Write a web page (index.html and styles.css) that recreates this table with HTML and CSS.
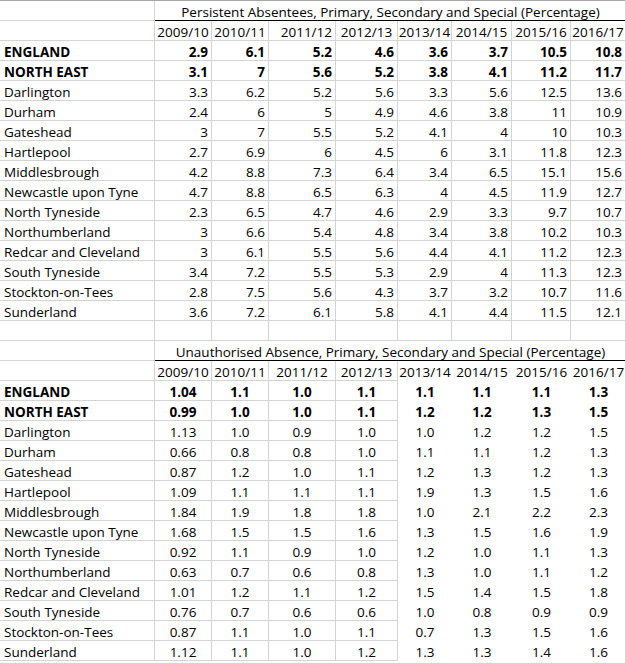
FILE: index.html
```html
<!DOCTYPE html>
<html>
<head>
<meta charset="utf-8">
<link rel="stylesheet" href="styles.css">
</head>
<body>
<div class="sheet">
  <div class="grid top">
    <div class="c lab first"></div>
    <div class="c title first">Persistent Absentees, Primary, Secondary and Special (Percentage)</div>

    <div class="c lab"></div>
    <div class="c yr">2009/10</div><div class="c yr">2010/11</div><div class="c yr r">2011/12</div><div class="c yr">2012/13</div><div class="c yr">2013/14</div><div class="c yr">2014/15</div><div class="c yr">2015/16</div><div class="c yr">2016/17</div>

    <div class="c lab b">ENGLAND</div><div class="c v b">2.9</div><div class="c v b">6.1</div><div class="c v b">5.2</div><div class="c v b">4.6</div><div class="c v b">3.6</div><div class="c v b">3.7</div><div class="c v b">10.5</div><div class="c v b">10.8</div>
    <div class="c lab b">NORTH EAST</div><div class="c v b">3.1</div><div class="c v b">7</div><div class="c v b">5.6</div><div class="c v b">5.2</div><div class="c v b">3.8</div><div class="c v b">4.1</div><div class="c v b">11.2</div><div class="c v b">11.7</div>
    <div class="c lab">Darlington</div><div class="c v">3.3</div><div class="c v">6.2</div><div class="c v">5.2</div><div class="c v">5.6</div><div class="c v">3.3</div><div class="c v">5.6</div><div class="c v">12.5</div><div class="c v">13.6</div>
    <div class="c lab">Durham</div><div class="c v">2.4</div><div class="c v">6</div><div class="c v">5</div><div class="c v">4.9</div><div class="c v">4.6</div><div class="c v">3.8</div><div class="c v">11</div><div class="c v">10.9</div>
    <div class="c lab">Gateshead</div><div class="c v">3</div><div class="c v">7</div><div class="c v">5.5</div><div class="c v">5.2</div><div class="c v">4.1</div><div class="c v">4</div><div class="c v">10</div><div class="c v">10.3</div>
    <div class="c lab">Hartlepool</div><div class="c v">2.7</div><div class="c v">6.9</div><div class="c v">6</div><div class="c v">4.5</div><div class="c v">6</div><div class="c v">3.1</div><div class="c v">11.8</div><div class="c v">12.3</div>
    <div class="c lab">Middlesbrough</div><div class="c v">4.2</div><div class="c v">8.8</div><div class="c v">7.3</div><div class="c v">6.4</div><div class="c v">3.4</div><div class="c v">6.5</div><div class="c v">15.1</div><div class="c v">15.6</div>
    <div class="c lab">Newcastle upon Tyne</div><div class="c v">4.7</div><div class="c v">8.8</div><div class="c v">6.5</div><div class="c v">6.3</div><div class="c v">4</div><div class="c v">4.5</div><div class="c v">11.9</div><div class="c v">12.7</div>
    <div class="c lab">North Tyneside</div><div class="c v">2.3</div><div class="c v">6.5</div><div class="c v">4.7</div><div class="c v">4.6</div><div class="c v">2.9</div><div class="c v">3.3</div><div class="c v">9.7</div><div class="c v">10.7</div>
    <div class="c lab">Northumberland</div><div class="c v">3</div><div class="c v">6.6</div><div class="c v">5.4</div><div class="c v">4.8</div><div class="c v">3.4</div><div class="c v">3.8</div><div class="c v">10.2</div><div class="c v">10.3</div>
    <div class="c lab">Redcar and Cleveland</div><div class="c v">3</div><div class="c v">6.1</div><div class="c v">5.5</div><div class="c v">5.6</div><div class="c v">4.4</div><div class="c v">4.1</div><div class="c v">11.2</div><div class="c v">12.3</div>
    <div class="c lab">South Tyneside</div><div class="c v">3.4</div><div class="c v">7.2</div><div class="c v">5.5</div><div class="c v">5.3</div><div class="c v">2.9</div><div class="c v">4</div><div class="c v">11.3</div><div class="c v">12.3</div>
    <div class="c lab">Stockton-on-Tees</div><div class="c v">2.8</div><div class="c v">7.5</div><div class="c v">5.6</div><div class="c v">4.3</div><div class="c v">3.7</div><div class="c v">3.2</div><div class="c v">10.7</div><div class="c v">11.6</div>
    <div class="c lab">Sunderland</div><div class="c v">3.6</div><div class="c v">7.2</div><div class="c v">6.1</div><div class="c v">5.8</div><div class="c v">4.1</div><div class="c v">4.4</div><div class="c v">11.5</div><div class="c v">12.1</div>

    <div class="c lab"></div><div class="c"></div><div class="c"></div><div class="c"></div><div class="c"></div><div class="c"></div><div class="c"></div><div class="c"></div><div class="c"></div>
  </div>

  <div class="grid low">
    <div class="c lab"></div>
    <div class="c title">Unauthorised Absence, Primary, Secondary and Special (Percentage)</div>

    <div class="c lab"></div>
    <div class="c yc">2009/10</div><div class="c yc">2010/11</div><div class="c yc">2011/12</div><div class="c yc">2012/13</div><div class="n yc">2013/14</div><div class="n yc">2014/15</div><div class="n yc">2015/16</div><div class="n yc">2016/17</div>

    <div class="c lab b">ENGLAND</div><div class="c m b">1.04</div><div class="c m b">1.1</div><div class="c m b">1.0</div><div class="c m b">1.1</div><div class="n m b">1.1</div><div class="n m b">1.1</div><div class="n m b">1.1</div><div class="n m b">1.3</div>
    <div class="c lab b">NORTH EAST</div><div class="c m b">0.99</div><div class="c m b">1.0</div><div class="c m b">1.0</div><div class="c m b">1.1</div><div class="n m b">1.2</div><div class="n m b">1.2</div><div class="n m b">1.3</div><div class="n m b">1.5</div>
    <div class="c lab">Darlington</div><div class="c m">1.13</div><div class="c m">1.0</div><div class="c m">0.9</div><div class="c m">1.0</div><div class="n m">1.0</div><div class="n m">1.2</div><div class="n m">1.2</div><div class="n m">1.5</div>
    <div class="c lab">Durham</div><div class="c m">0.66</div><div class="c m">0.8</div><div class="c m">0.8</div><div class="c m">1.0</div><div class="n m">1.1</div><div class="n m">1.1</div><div class="n m">1.2</div><div class="n m">1.3</div>
    <div class="c lab">Gateshead</div><div class="c m">0.87</div><div class="c m">1.2</div><div class="c m">1.0</div><div class="c m">1.1</div><div class="n m">1.2</div><div class="n m">1.3</div><div class="n m">1.2</div><div class="n m">1.3</div>
    <div class="c lab">Hartlepool</div><div class="c m">1.09</div><div class="c m">1.1</div><div class="c m">1.1</div><div class="c m">1.1</div><div class="n m">1.9</div><div class="n m">1.3</div><div class="n m">1.5</div><div class="n m">1.6</div>
    <div class="c lab">Middlesbrough</div><div class="c m">1.84</div><div class="c m">1.9</div><div class="c m">1.8</div><div class="c m">1.8</div><div class="n m">1.0</div><div class="n m">2.1</div><div class="n m">2.2</div><div class="n m">2.3</div>
    <div class="c lab">Newcastle upon Tyne</div><div class="c m">1.68</div><div class="c m">1.5</div><div class="c m">1.5</div><div class="c m">1.6</div><div class="n m">1.3</div><div class="n m">1.5</div><div class="n m">1.6</div><div class="n m">1.9</div>
    <div class="c lab">North Tyneside</div><div class="c m">0.92</div><div class="c m">1.1</div><div class="c m">0.9</div><div class="c m">1.0</div><div class="n m">1.2</div><div class="n m">1.0</div><div class="n m">1.1</div><div class="n m">1.3</div>
    <div class="c lab">Northumberland</div><div class="c m">0.63</div><div class="c m">0.7</div><div class="c m">0.6</div><div class="c m">0.8</div><div class="n m">1.3</div><div class="n m">1.0</div><div class="n m">1.1</div><div class="n m">1.2</div>
    <div class="c lab">Redcar and Cleveland</div><div class="c m">1.01</div><div class="c m">1.2</div><div class="c m">1.1</div><div class="c m">1.2</div><div class="n m">1.5</div><div class="n m">1.4</div><div class="n m">1.5</div><div class="n m">1.8</div>
    <div class="c lab">South Tyneside</div><div class="c m">0.76</div><div class="c m">0.7</div><div class="c m">0.6</div><div class="c m">0.6</div><div class="n m">1.0</div><div class="n m">0.8</div><div class="n m">0.9</div><div class="n m">0.9</div>
    <div class="c lab">Stockton-on-Tees</div><div class="c m">0.87</div><div class="c m">1.1</div><div class="c m">1.0</div><div class="c m">1.1</div><div class="n m">0.7</div><div class="n m">1.3</div><div class="n m">1.5</div><div class="n m">1.6</div>
    <div class="c lab">Sunderland</div><div class="c m">1.12</div><div class="c m">1.1</div><div class="c m">1.0</div><div class="c m">1.2</div><div class="n m">1.3</div><div class="n m">1.3</div><div class="n m">1.4</div><div class="n m">1.6</div>
  </div>
</div>
</body>
</html>
```

FILE: styles.css
```css
html, body {
  margin: 0;
  padding: 0;
  background: #ffffff;
  overflow: hidden;
}

.sheet {
  width: 626px;
  border-top: 1px solid #a5a5a5;
  font-family: "Open Sans", "Liberation Sans", sans-serif;
  font-size: 13.5px;
  color: #000000;
}

.grid {
  display: grid;
  grid-template-columns: 155px 57px 57px 67px 62px 54px 60px 59px 55px;
  grid-auto-rows: 20px;
}

.c, .n {
  box-sizing: border-box;
  line-height: 20px;
  padding-top: 1px;
  white-space: nowrap;
  overflow: hidden;
}

.c {
  border-right: 1px solid #d4d4d4;
  border-bottom: 1px solid #d4d4d4;
}

.lab {
  padding-left: 4px;
}

.title {
  grid-column: 2 / span 8;
  border-bottom: 1px solid #000000;
  border-right: none;
  text-align: center;
}

.yr, .yc {
  text-align: center;
}

.yr.r {
  text-align: right;
  padding-right: 3px;
}

.v {
  text-align: right;
  padding-right: 3px;
}

.m {
  text-align: center;
}

.b {
  font-weight: 700;
}
```
